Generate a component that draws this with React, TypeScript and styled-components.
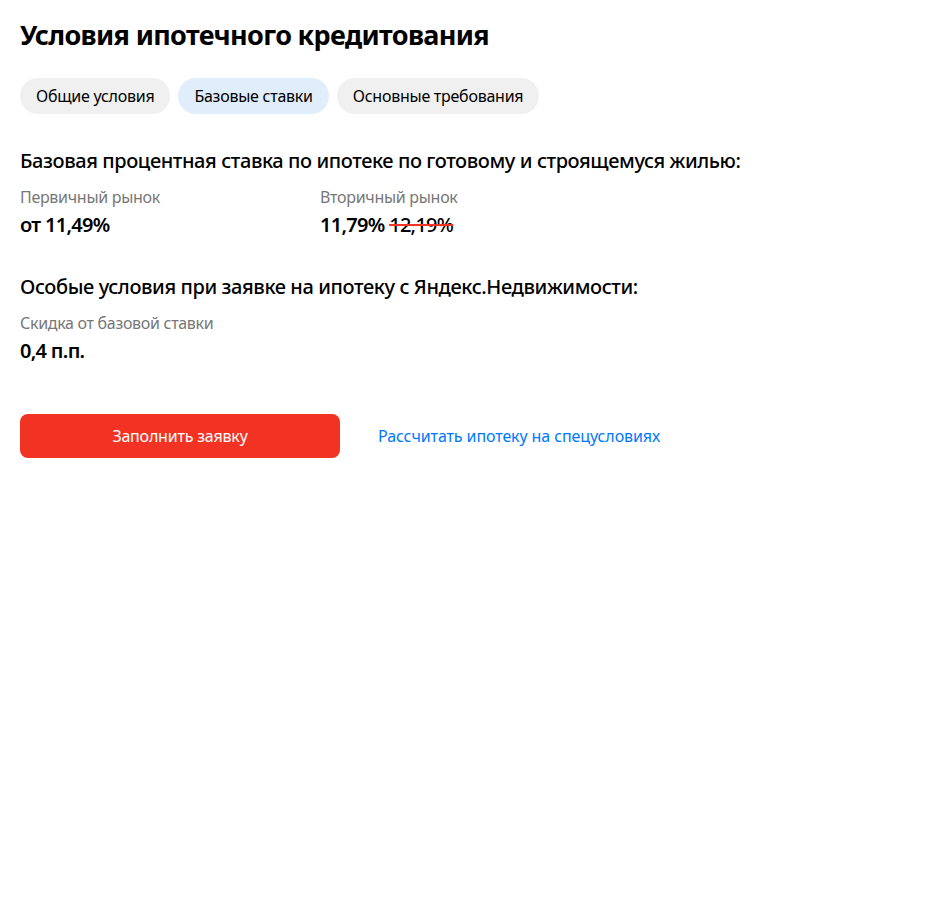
import React from "react";
import styled, { createGlobalStyle } from "styled-components";

const Global = createGlobalStyle`
  html, body { margin: 0; padding: 0; background: #fff; }
  body { font-family: "Noto Sans", "Open Sans", Arial, sans-serif; color: #000; }
`;

const Page = styled.div`
  padding: 16px 20px 20px;
`;

const Title = styled.h1`
  margin: 0;
  font-size: 27px;
  line-height: 38px;
  font-weight: 700;
  letter-spacing: -0.65px;
`;

const Tabs = styled.div`
  display: flex;
  gap: 8px;
  margin-top: 24px;
`;

const Tab = styled.button<{ $active?: boolean }>`
  height: 36px;
  padding: 0 16px;
  border: none;
  border-radius: 18px;
  background: ${(p) => (p.$active ? "#e0edfb" : "#f0f0f0")};
  font-family: inherit;
  font-size: 16px;
  color: #000;
  letter-spacing: -0.25px;
`;

const Section = styled.section<{ $top: number }>`
  margin-top: ${(p) => p.$top}px;
`;

const Heading = styled.h2`
  margin: 0;
  font-size: 20px;
  line-height: 26px;
  font-weight: 500;
  letter-spacing: -0.4px;
`;

const Grid = styled.div`
  display: grid;
  grid-template-columns: 300px 300px;
  margin-top: 13px;
`;

const Label = styled.div`
  font-size: 16px;
  line-height: 20px;
  color: #777;
  letter-spacing: -0.3px;
`;

const Value = styled.div`
  margin-top: 5px;
  font-size: 20px;
  line-height: 26px;
  font-weight: 600;
  letter-spacing: -0.7px;
`;

const Old = styled.span`
  font-weight: 500;
  text-decoration: line-through;
  text-decoration-color: #f23323;
  text-decoration-thickness: 2px;
`;

const Actions = styled.div`
  display: flex;
  align-items: center;
  gap: 38px;
  margin-top: 50px;
`;

const Primary = styled.button`
  width: 320px;
  height: 44px;
  border: none;
  border-radius: 8px;
  background: #f23323;
  color: #fff;
  font-family: inherit;
  font-size: 16px;
  letter-spacing: -0.2px;
`;

const Link = styled.a`
  color: #0077ff;
  font-size: 16px;
  text-decoration: none;
  letter-spacing: -0.1px;
`;

export default function App() {
  return (
    <Page>
      <Global />
      <Title>Условия ипотечного кредитования</Title>
      <Tabs>
        <Tab>Общие условия</Tab>
        <Tab $active>Базовые ставки</Tab>
        <Tab>Основные требования</Tab>
      </Tabs>
      <Section $top={34}>
        <Heading>Базовая процентная ставка по ипотеке по готовому и строящемуся жилью:</Heading>
        <Grid>
          <div>
            <Label>Первичный рынок</Label>
            <Value>от 11,49%</Value>
          </div>
          <div>
            <Label>Вторичный рынок</Label>
            <Value>
              11,79% <Old>12,19%</Old>
            </Value>
          </div>
        </Grid>
      </Section>
      <Section $top={36}>
        <Heading>Особые условия при заявке на ипотеку с Яндекс.Недвижимости:</Heading>
        <Grid>
          <div>
            <Label>Скидка от базовой ставки</Label>
            <Value>0,4 п.п.</Value>
          </div>
        </Grid>
      </Section>
      <Actions>
        <Primary>Заполнить заявку</Primary>
        <Link href="#">Рассчитать ипотеку на спецусловиях</Link>
      </Actions>
    </Page>
  );
}
